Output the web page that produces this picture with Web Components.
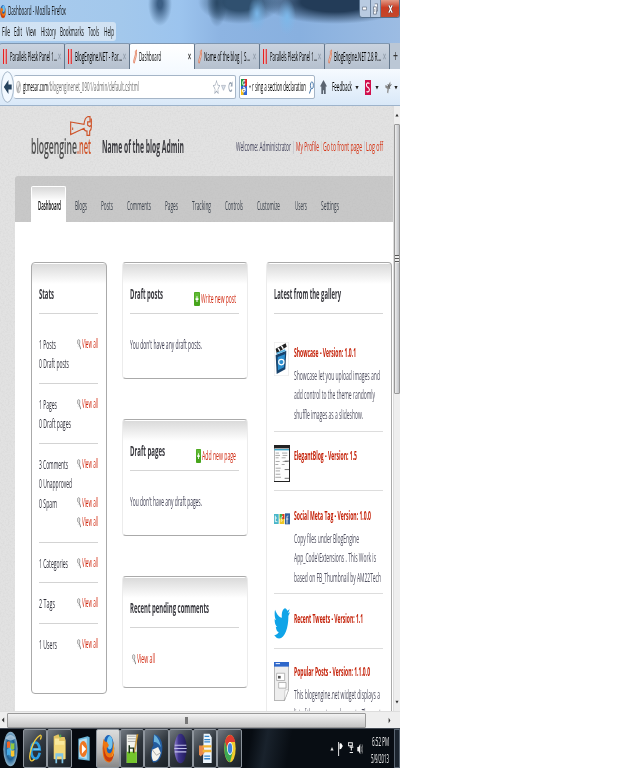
<!DOCTYPE html>
<html lang="en"><head><meta charset="utf-8"><title>Dashboard</title>
<style>
html,body{margin:0;background:#fff;height:768px;overflow:hidden}
body{font-family:"Open Sans","Noto Sans",sans-serif}
</style></head><body>
<desktop-shell></desktop-shell>
<script>
const make = (name, css, html, after) => customElements.define(name, class extends HTMLElement {
  connectedCallback() {
    if (this.shadowRoot) return;
    const root = this.attachShadow({ mode: 'open' });
    const a = (k, d = '') => this.getAttribute(k) ?? d;
    root.innerHTML = `<style>*{box-sizing:border-box}${typeof css === 'function' ? css(a) : css}</style>` + (typeof html === 'function' ? html(a) : html);
    if (after) after(this, root);
  }
});
// Condensed text: t(text, width, extra attributes)
const t = (s, w, x = '') => `<fit-text w="${w}" ${x}>${s}</fit-text>`;
const ic = (n, w, h, ml = 0) => `<pic-icon n="${n}" w="${w}" h="${h}" ml="${ml}"></pic-icon>`;

const svg = {
firefox:['0 0 32 32','<circle cx="16" cy="16" r="14" fill="#1c62b8"/><circle cx="19" cy="10" r="7" fill="#6cc3f2"/><path d="M4 6C0 14 0 25 9 29c9 4 20 0 21-11 0-5-2-8-4-10 2 7-1 13-8 13-5 0-7-3-6-6 2 0 4-1 5-3-3 0-3-3-5-3S7 10 4 6z" fill="#ee7611"/><path d="M4 12c-2 9 2 15 9 17 8 2 15-2 17-10-4 6-9 7-14 6-7-1-10-6-12-13z" fill="#c93c10"/><path d="M28 10c2 7 0 12-5 15 6-2 9-8 5-15z" fill="#ffd33b"/>'],
bars:['0 0 10 30','<path d="M0 0h3.500v30H0zM6 0h3.500v30H6z" fill="#e82020"/><path d="M3.500 0H6v30H3.500z" fill="#e9dede"/>'],
wrenchs:['0 0 10 20','<path d="M1 17L6 7V3l3-2v4l-1 5-5 9z" fill="#fbe6dd" stroke="#dd6a45" stroke-width="1.2"/>'],
back:['0 0 14 32','<ellipse cx="7" cy="16" rx="6.5" ry="15.3" fill="#f3f9ff" stroke="#93a6bb" stroke-width=".8"/><path d="M3 16l5-7v4.500h3.500v5H8V23z" fill="#28445f"/>'],
globe:['0 0 10 20','<ellipse cx="5" cy="10" rx="4.7" ry="9" fill="#b3b3b3"/><path d="M1 6l3-4 3 2-2 5-2 3zM6 10l3-1-1 6-3 3z" fill="#e9e9e9"/>'],
star:['0 0 20 20','<path d="M10 1l3 6 6 1-5 5 1 6-5-3-5 3 1-6-5-5 6-1z" fill="#fff" stroke="#a3acb9" stroke-width="1.5"/>'],
down:['0 0 10 10','<path d="M1 2h8L5 9z" fill="currentColor"/>'],
downo:['0 0 10 10','<path d="M1 2h8L5 9z" fill="#dde3ec" stroke="#9aa5b4"/>'],
reload:['0 0 20 20','<path d="M16 14a7 7 0 1 1 0-8" fill="none" stroke="#98a4b3" stroke-width="3"/><path d="M18 0v9h-8z" fill="#98a4b3"/>'],
google:['0 0 14 30','<path d="M0 0h14v30H0z" fill="#2f66d8"/><path d="M0 0h7v13H0z" fill="#209a43"/><path d="M8 0h6v12L9 15z" fill="#e02a24"/><path d="M0 20l6-3v13H0z" fill="#f5bd16"/><path d="M10 4q-6-3-6 4c0 5 6 4 5 0M5 15c8 2 5 11 0 9-4-2 0-6 4-4" fill="none" stroke="#fff" stroke-width="2"/>'],
find:['0 0 12 24','<ellipse cx="7" cy="8" rx="3.6" ry="6.5" fill="#fff" stroke="#396ca3" stroke-width="1.8"/><path d="M5 14L1 23" stroke="#396ca3" stroke-width="2"/>'],
home:['0 0 16 26','<path d="M8 0l8 12h-3v14h-4v-7H7v7H3V12H0z" fill="#5b6470"/>'],
sicon:['0 0 16 30','<path d="M0 0h16v30H0z" fill="#d10f4c"/><path d="M12 7C5 3 2 9 5 13l5 3c4 4 0 10-6 7" fill="none" stroke="#fff" stroke-width="2.6"/>'],
bug:['0 0 20 26','<path d="M1 8l7 2 7-9 1 9-5 6-2 9-3-2 1-7-6-3z" fill="#888"/><path d="M8 6l6 10M13 10l6-3" stroke="#444" stroke-width="1.5"/>'],
wrench:['0 0 66 57','<path d="M2 17L42 24C43 14 46 4 53 2h7v15h-7v9l6 4 5-4V7v25c0 7-4 10-5 11v12h-8V43c-6 0-8-3-9-8L2 53z" fill="none" stroke="#ce5228" stroke-width="3.4"/><path d="M8 33v7" stroke="#ce5228" stroke-width="3"/>'],
lens:['0 0 12 26','<ellipse cx="5" cy="7" rx="3.5" ry="6" fill="#eee" stroke="#777" stroke-width="1.6"/><path d="M7 13l4 11" stroke="#777" stroke-width="2.4"/><path d="M2 17h5" stroke="#aaa" stroke-width="1"/>'],
plus:['0 0 18 42','<rect width="18" height="42" rx="3" fill="#47a51c"/><rect x="2" y="2" width="14" height="18" fill="#6bc23f" opacity=".7"/><path d="M7.500 13h3v6h3v5h-3v6h-3v-6h-3v-5h3z" fill="#fff"/>'],
showcase:['0 0 45 100','<path d="M.5 1h43v98H.5z" fill="#fff" stroke="#ccc"/><path d="M5 20l30-16 3 10L8 34z" fill="#222"/><path d="M12 17l6 9M22 11l6 9" stroke="#fff" stroke-width="4"/><path d="M5 38l32-12-3 54-26 14z" fill="#18436c"/><path d="M11 44l22-8-3 38-18 9z" fill="#2c8fd0"/><circle cx="22" cy="59" r="8" fill="none" stroke="#fff" stroke-width="3.5"/><path d="M8 34l26-10" stroke="#59b5e5" stroke-width="5"/>'],
elegant:['0 0 48 110','<path d="M0 0h48v110H0z" fill="#222"/><path d="M1 10h44v97H1z" fill="#fdfdfd"/><path d="M1 12h44v4H1z" fill="#3ba4c7"/><path d="M5 24h10m9 0h16M4 31h14m8 0h14M5 38h9m9 0h12M5 49h12m9 0h15M4 58h9m10 0h9M5 69h15M5 77h13M5 87h14M4 96h17" stroke="#999" stroke-width="2.5"/><path d="M32 48h14M32 73h14M32 99h14" stroke="#333" stroke-width="2"/>'],
social:['0 0 48 36','<path d="M0 3h14v30H0z" fill="#49b6c9"/><path d="M17 3h14v30H17z" fill="#eec726"/><path d="M17 3h8v14h-8z" fill="#3db24b"/><path d="M25 3h6v15h-6z" fill="#df3527"/><path d="M33 1h15v33H33z" fill="#315f9e"/><path d="M4 8v18h6M4 15h5M27 11c-6-2-7 5-4 9s-1 6-3 4M43 9c-5-1-4 4-4 8v15M36 18h7" stroke="#fff" stroke-width="2.5" fill="none"/>'],
bird:['0 0 24 24','<path d="M23.950 4.570a10 10 0 0 1-2.820.770 4.960 4.960 0 0 0 2.160-2.720c-.950.550-2 .950-3.130 1.180a4.920 4.920 0 0 0-8.380 4.480C7.690 8.090 4.070 6.130 1.640 3.160a4.820 4.820 0 0 0-.670 2.480c0 1.710.870 3.210 2.190 4.100a4.900 4.900 0 0 1-2.230-.620v.060a4.920 4.920 0 0 0 3.950 4.830 5 5 0 0 1-2.210.080 4.940 4.940 0 0 0 4.600 3.420A9.870 9.870 0 0 1 0 19.540a14 14 0 0 0 7.550 2.210c9.050 0 14-7.500 14-13.980 0-.210 0-.420-.020-.630a9.940 9.940 0 0 0 2.420-2.570z" fill="#0fa4e8"/>'],
popular:['0 0 45 118','<path d="M1 1h43v82L31 117H1z" fill="#eee" stroke="#888" stroke-width="2"/><path d="M0 0h45v14H0z" fill="#2e67ca"/><path d="M5 5h13" stroke="#fff" stroke-width="3"/><path d="M8 34h24v22H8zM14 62h22v17H14z" fill="#fff" stroke="#999" stroke-width="2"/><path d="M12 42h8v8h-8z" fill="#555"/><path d="M31 117l2-32 11-2z" fill="#fff" stroke="#888"/>'],
left:['0 0 10 20','<path d="M8 2v16L2 10z" fill="#333"/>'],right:['0 0 10 20','<path d="M2 2v16l6-8z" fill="#333"/>'],
start:['0 0 46 108','<defs><radialGradient id="g"><stop stop-color="#61c6ee"/><stop offset=".6" stop-color="#1d5d92"/><stop offset="1" stop-color="#8eb5cd"/></radialGradient></defs><ellipse cx="23" cy="54" rx="22" ry="52" fill="url(#g)"/><path d="M8 22q15-22 30 0-15 13-30 0z" fill="#d9eaf4" opacity=".6"/><path d="M12 34q6-6 10 0v18q-5-5-10 0z" fill="#f06524"/><path d="M24 35q5 5 11 0v18q-6 5-11 0z" fill="#93c83e"/><path d="M12 56q5-5 10 0v18q-5-5-10 0z" fill="#45a9e5"/><path d="M24 57q5 5 11 0v18q-6 5-11 0z" fill="#ffc72e"/>'],
ie:['0 0 40 100','<path d="M33 64C27 93 7 86 7 56S30 20 33 53H11" fill="none" stroke="#2a9de2" stroke-width="8"/><path d="M33 52H14" stroke="#a3e2fb" stroke-width="3"/><path d="M5 88C-3 77 10 24 33 8c5-3 6 3 2 13M5 88c3 5 8 0 12-4" fill="none" stroke="#f6ce3b" stroke-width="4"/>'],
folder:['0 0 38 92','<path d="M2 10l14-6 4 8h14l3 10v55H2z" fill="#e4c563"/><path d="M5 16h13v8h16v52H5z" fill="#fae99b"/><path d="M4 35h31v43H4z" fill="#f4d97a"/><path d="M7 60h23v30h-5V70H12v20H7z" fill="#80c5e6"/><path d="M19 5h5v8h-5z" fill="#4eab4f"/>'],
media:['0 0 34 78','<path d="M1 8l26-7 6 3v70l-32-4z" fill="#6db9dd"/><path d="M3 12l22-5v62l-22-5z" fill="#b8ddef"/><ellipse cx="15" cy="39" rx="11" ry="24" fill="#ee7722"/><path d="M11 25v28l12-14z" fill="#fff"/>'],
notepad:['0 0 36 96','<path d="M2 5h28v88H2z" fill="#f4f5ef"/><path d="M2 58h28v35H2z" fill="#74c52c"/><path d="M5 10h22M5 18h22M5 26h22" stroke="#888" stroke-width="2"/><path d="M9 38v25M9 47h12v14" stroke="#193119" stroke-width="4" fill="none"/><path d="M34 4l-9 51-2 8V53L30 4z" fill="#f1b436" stroke="#80551b"/>'],
thunder:['0 0 40 96','<path d="M13 4q23 5 25 38c1 37-15 52-28 49Q1 82 3 59q1-14 8-22-5-14 2-33z" fill="#235b9e"/><path d="M13 5q16 12 21 40-10-18-22-17z" fill="#69b1dc"/><path d="M7 52l18-9 8 18q-6 27-23 26-8-14-3-35z" fill="#f5f3ed"/><path d="M7 52l13 17 13-8" stroke="#aaa" stroke-width="3" fill="none"/>'],
eclipse:['0 0 38 92','<defs><linearGradient id="e"><stop stop-color="#9382d1"/><stop offset=".35" stop-color="#3e348c"/><stop offset="1" stop-color="#211b5b"/></linearGradient></defs><ellipse cx="19" cy="46" rx="18" ry="44" fill="url(#e)"/><path d="M2 36h34M1 46h36M2 56h34" stroke="#c4c4ec" stroke-width="3"/>'],
doc:['0 0 42 94','<path d="M15 2h19l7 12v77H13z" fill="#edf5fc"/><path d="M18 10h15M17 20h19M17 27h19M17 70h19M17 78h19" stroke="#3687cb" stroke-width="4"/><path d="M0 38h15l3 22-13 11-5-6z" fill="#e98a4c"/><path d="M12 37h28v7H12zM12 51h28v7H12z" fill="#f4b634"/>'],
chrome:['0 0 36 90','<ellipse cx="18" cy="45" rx="17" ry="43" fill="#f2cd2c"/><path d="M3 24C9-4 28-5 34 25H18q-8 2-9 22z" fill="#df3b30"/><path d="M3 23q-7 53 15 65l8-32q-7 12-14 0z" fill="#3ca852"/><ellipse cx="18" cy="45" rx="8.500" ry="20" fill="#fff"/><ellipse cx="18" cy="45" rx="6.500" ry="16" fill="#3d82df"/>'],
up:['0 0 10 10','<path d="M1 9h8L5 2z" fill="#ddd"/>'],
flag:['0 0 20 42','<path d="M2 0v42" stroke="#eee" stroke-width="3"/><path d="M5 5l5-2 6 9-6 9-5 1z" fill="#fff"/>'],
net:['0 0 18 38','<path d="M1 2h12v9H1zM5 15h11M10 13v12M5 31h10" fill="none" stroke="#eee" stroke-width="3"/>'],
sound:['0 0 20 36','<path d="M1 12h4l6-10v32L5 25H1z" fill="#eee"/><path d="M14 10q4 8 0 17M17 4q6 14 0 28" fill="none" stroke="#ccc" stroke-width="1.5"/>'],
max:['0 0 12 28','<path d="M4 2h7v17H8M1 9h7v17H1z" fill="#fff" stroke="#48566c" stroke-width="1.5"/><path d="M4 14v7" stroke="#48566c"/>'],
min:['0 0 12 14','<path d="M1 3h10v8H1z" fill="#fff" stroke="#48566c" stroke-width="1.500"/>'],
x:['0 0 10 20','<path d="M1 2l8 16M9 2L1 18" stroke="currentColor" stroke-width="2.200"/>'],
xw:['0 0 12 24','<path d="M2 3l8 18M10 3L2 21" stroke="#57282a" stroke-width="5"/><path d="M2 3l8 18M10 3L2 21" stroke="#fff" stroke-width="3"/>']
};
const noise = `url("data:image/svg+xml,%3Csvg xmlns='http://www.w3.org/2000/svg' width='120' height='120'%3E%3Cfilter id='n'%3E%3CfeTurbulence type='fractalNoise' baseFrequency='.6' numOctaves='2' stitchTiles='stitch'/%3E%3CfeColorMatrix values='0 0 0 0 .4 0 0 0 0 .4 0 0 0 0 .4 .3 0 0 0 -.12'/%3E%3C/filter%3E%3Crect width='120' height='120' filter='url(%23n)'/%3E%3C/svg%3E")`;

make('pic-icon', a => `:host{display:block;flex:none;width:${a('w')}px;height:${a('h')}px;margin-left:${a('ml', 0)}px}svg{display:block;width:100%;height:100%}`,
  a => `<svg viewBox="${svg[a('n')][0]}" preserveAspectRatio="none">${svg[a('n')][1]}</svg>`);

make('window-title', `:host{display:block;height:43px;background:
 radial-gradient(ellipse 9px 18px at 257px 14px,#79b6e8,transparent),radial-gradient(ellipse 9px 18px at 287px 17px,#7cb8ea,transparent),
 radial-gradient(ellipse 10px 24px at 217px 3px,#2a4865,transparent),radial-gradient(ellipse 75px 22px at 335px 2px,#233c58 45%,transparent),radial-gradient(ellipse 42px 22px at 240px 2px,#30506f 40%,transparent),
 radial-gradient(ellipse 12px 22px at 160px 4px,#3c5f85 20%,transparent),
 linear-gradient(90deg,#a9cbed,#a3c8ec 30%,#9cc4ee 45%,#8db4e2 55%,#88b0df 75%,#9cbce3)}
 .a{display:flex;height:22px;align-items:center}.b{display:flex;height:19px;width:116px;align-items:center;background:#dce8f5cc;border-radius:0 3px 3px 0}
 .w{display:flex;height:18px;align-self:flex-start;margin-left:auto;border:1px solid #57728f;border-top:0;border-radius:0 0 3px 3px;width:41px;background:#b9cbe1;flex:none;overflow:hidden}
 .w div{flex:1;display:flex;align-items:center;justify-content:center;border-right:1px solid #6b829e}.w .c{flex:0 0 18px;background:linear-gradient(#e29a86,#ca3d24 45%,#c3482b);border:0}`,
 `<div class="a">${ic('firefox',6,15)}${t('Dashboard - Mozilla Firefox',58,'ml="2"')}<div class="w"><div>${ic('min',5,5)}</div><div>${ic('max',5,12)}</div><div class="c">${ic('xw',5,10)}</div></div></div>
 <div class="b">${[['File',8,2],['Edit',8,4],['View',10,4],['History',15,5],['Bookmarks',24,4],['Tools',11,4],['Help',10,5]].map(m=>t(m[0],m[1],`ml="${m[2]}"`)).join('')}</div>`);

make('browser-tab', a => `:host{display:flex;align-items:center;width:65px;height:26px;flex:none;padding-right:3px;border-right:1px solid #64778c;border-top:1px solid #8097b0;border-radius:2px 2px 0 0;
 background:${a('active')?'linear-gradient(#fff,#f5faff)':'linear-gradient(#cad3df,#b5c0ce)'};color:${a('active')?'#222':'#8c98a5'}}s{flex:1}`,
 a => `${ic(a('icon'),4,15,3)}${t(a('label'),a('w'),`ml="${a('gap',3)}" c="#000"`)}<s></s>${ic('x',3,7)}`);

make('tab-strip', `:host{display:flex;height:26px;background:#9fb6d0}b{flex:1;background:#bbc7d5;display:grid;place-items:center}`,
 `<browser-tab icon="bars" label="Parallels Plesk Panel 1..." w="47"></browser-tab><browser-tab icon="bars" label="BlogEngine.NET - Par..." w="47"></browser-tab><browser-tab active="1" icon="wrenchs" label="Dashboard" w="22" gap="2"></browser-tab><browser-tab icon="wrenchs" label="Name of the blog | S..." w="46" gap="2"></browser-tab><browser-tab icon="bars" label="Parallels Plesk Panel 1..." w="47"></browser-tab><browser-tab icon="wrenchs" label="BlogEngine.NET 2.8 R..." w="47" gap="2"></browser-tab><b>${t('+',5,'size="17" wt="400" c="#333"')}</b>`);

make('nav-toolbar', `:host{display:flex;align-items:center;height:37px;background:linear-gradient(#f6faff,#d9e8f8);border-bottom:1px solid #9db3cb;padding-left:1px;color:#222}
 .u,.s{display:flex;align-items:center;height:24px;background:#fff;border:1px solid #a5b5c7;border-radius:2px;flex:none}.u{width:222px;padding-left:2px;border-left:0}.s{width:76px;margin-left:3px}s{flex:1}`,
 `${ic('back',13,32)}<div class="u">${ic('globe',5,14)}${t('gtmesar.com',25,'ml="2" c="#000"')}${t('/blogenginenet_0901/admin/default.cshtml',91,'c="#777"')}<s></s>${ic('star',7,14)}${ic('downo',5,7,1)}${ic('reload',5,12,2)}<s style="flex:0 0 2px"></s></div>
 <div class="s">${ic('google',6,16,1)}${ic('down',2,4,2)}${t('r sing a section declaration',54,'ml="1" c="#000"')}${ic('find',5,13,3)}</div>
 ${ic('home',7,14,5)}${t('Feedback',20,'ml="5" c="#000"')}${ic('down',4,5,3)}${ic('sicon',6,15,6)}${ic('down',4,5,4)}${ic('bug',7,13,6)}${ic('down',4,5,2)}`);

make('site-header', `:host{display:flex;height:70px;position:relative;align-items:flex-start}
 .l{display:flex;margin:22px 0 0 31px;height:34px;align-items:center;position:relative}.l pic-icon{position:absolute;left:39px;top:-12px}
 .n{margin:31px 0 0 11px}.w{display:flex;margin:31px 0 0 52px}`,
 `<div class="l">${t('blogengine',46,'size="22" c="#4e4e4e" wt="600"')}${t('.net',14,'size="22" c="#d0542a" wt="600"')}${ic('wrench',22,20)}</div>
 <div class="n">${t('Name of the blog Admin',82,'size="17" c="#3d3d42" wt="700"')}</div>
 <div class="w">${t('Welcome: Administrator',55,'c="#44445c"')}${t('|',1,'ml="2" c="#446"')}${t('My Profile',23,'ml="2" c="#d12a10"')}${t('|',1,'ml="2" c="#996"')}${t('Go to front page',39,'ml="1" c="#d53010"')}${t('|',1,'ml="2" c="#446"')}${t('Log off',17,'ml="1" c="#d53010"')}</div>`);

make('site-nav', `:host{display:flex;align-items:flex-end;height:46px;margin-left:15px;padding-left:16px;background:${noise} #c8c8c8;border-radius:3px 0 0 0}
 div{height:36px;padding-top:10px;display:flex}.on{width:35px;background:linear-gradient(#d8d8d8,#fff 14px);border:1px solid #fff;border-bottom:0;border-radius:2px 2px 0 0;padding:9px 0 0 6px}`,
 `<div class="on">${t('Dashboard',23,'wt="600" c="#000"')}</div><div>${[['Blogs',12,9],['Posts',12,14],['Comments',24,14],['Pages',13,14],['Tracking',19,14],['Controls',18,14],['Customize',23,14],['Users',12,15],['Settings',18,14]].map(m=>t(m[0],m[1],`ml="${m[2]}" c="#3c434d"`)).join('')}</div>`);

make('panel-card', a => `:host{display:block;flex:none;height:${a('h')}px;border:1px solid #aaa;border-left-color:${a('sides','lr').includes('l')?'#aaa':'#ececec'};border-right-color:${a('sides','lr').includes('r')?'#aaa':'#ececec'};border-radius:4px;background:linear-gradient(#fff 1px,#dadada 1px,#fff 21px);padding:0 8px 0 7px}
 header{display:flex;height:51px;border-bottom:1px solid #d5d5d5;padding-top:21px}s{flex:1}.x{display:flex;padding:5px 3px 0 0;height:20px;align-items:center;margin-top:2px}`,
 a => `<header>${t(a('label'),a('w'),'size="14" wt="700" c="#38383e" ')}<s></s><div class="x"><slot name="action"></slot></div></header><slot></slot>`);

make('view-link', `:host{display:flex;height:20px;align-items:center}`, a => `${ic('lens',4,11)}${t('View all',a('w',16),'ml="1" c="#d0280f"')}`);

make('stat-group', a => `:host{display:block;height:${a('h')}px;border-bottom:${a('last')?0:1}px solid #d3d3d3;padding-top:${a('pt',11)}px}.r{display:flex;justify-content:space-between;height:19.400px}view-link{margin-top:-1px}`,
 a => JSON.parse(a('rows')).map(r => `<div class="r">${r[0]?t(r[0],r[1],'c="#30303a"'):'<i></i>'}${r[2]?'<view-link></view-link>':''}</div>`).join(''));

make('gallery-item', a => `:host{display:flex;height:${a('h')}px;border-bottom:1px solid #ddd;width:109px}
 .i{width:19.500px;padding-top:${a('it')}px;flex:none}.t{padding-top:${a('tt')}px}.d{padding-top:3px}.d fit-text{height:19.300px}`,
 a => `<div class="i">${ic(a('icon'),a('iw',15),a('ih'))}</div><div class="t">${t(a('label'),a('w'),'wt="700" c="#c41f06"')}<div class="d">${JSON.parse(a('lines','[]')).map(l=>t(l[0],l[1],'c="#505060"')).join('')}</div></div>`);

make('admin-page', `:host{display:block;width:393px;height:605px;overflow:hidden;background:${noise} #e2e2e2}
 main{display:flex;margin-left:15px;background:#fff;height:489px;padding:40px 1px 0 16px;align-items:flex-start}.m{width:126px;margin:0 18px 0 15px;display:flex;flex-direction:column;gap:40px}.s{width:76px}.g{width:126px}
 .p{padding-top:21px}.a{display:flex;align-items:center}`,
 `<site-header></site-header><site-nav></site-nav><main>
 <panel-card class="s" h="432" label="Stats" w="15"><stat-group h="70" pt="21" rows='[["1 Posts",17,1],["0 Draft posts",30]]'></stat-group><stat-group h="60" rows='[["1 Pages",18,1],["0 Draft pages",32]]'></stat-group><stat-group h="99" rows='[["3 Comments",29,1],["0 Unapproved",33],["0 Spam",18,1],["",0,1]]'></stat-group><stat-group h="40" rows='[["1 Categories",29,1]]'></stat-group><stat-group h="41" rows='[["2 Tags",16,1]]'></stat-group><stat-group h="40" last="1" rows='[["1 Users",18,1]]'></stat-group></panel-card>
 <div class="m"><panel-card sides="" h="117" label="Draft posts" w="33"><div class="a" slot="action">${ic('plus',6,14)}${t('Write new post',35,'ml="1" c="#d0280f"')}</div><div class="p">${t("You don't have any draft posts.",72,'c="#3c3c50"')}</div></panel-card>
 <panel-card sides="" h="117" label="Draft pages" w="35"><div class="a" slot="action">${ic('plus',5,14)}${t('Add new page',34,'ml="1" c="#d0280f"')}</div><div class="p">${t("You don't have any draft pages.",72,'c="#3c3c50"')}</div></panel-card>
 <panel-card sides="" h="112" label="Recent pending comments" w="79"><div class="p" style="padding-left:2px"><view-link w="18"></view-link></div></panel-card></div>
 <panel-card sides="r" class="g" h="600" label="Latest from the gallery" w="67">
 <gallery-item h="118" icon="showcase" it="28" ih="34" tt="29" label="Showcase - Version: 1.0.1" w="62" lines='[["Showcase let you upload images and",86],["add control to the theme randomly",81],["shuffle images as a slideshow.",69]]'></gallery-item>
 <gallery-item h="59" icon="elegant" iw="16" it="13" ih="37" tt="14" label="ElegantBlog - Version: 1.5" w="63"></gallery-item>
 <gallery-item h="103" icon="social" iw="16" it="22" ih="12" tt="15" label="Social Meta Tag - Version: 1.0.0" w="77" lines='[["Copy files under BlogEngine",65],["App_Code\\\\Extensions . This Work is",82],["based on FB_Thumbnail by AM22Tech",87]]'></gallery-item>
 <gallery-item h="55" icon="bird" iw="16" it="11" ih="37" tt="15" label="Recent Tweets - Version: 1.1" w="69"></gallery-item>
 <gallery-item h="90" icon="popular" it="13" ih="39" tt="13" label="Popular Posts - Version: 1.1.0.0" w="76" lines='[["This blogengine.net widget displays a",86],["list of the most popular posts. The post",87]]'></gallery-item></panel-card></main>`);

make('scroll-v', `:host{display:flex;flex-direction:column;width:7px;height:605px;background:#eee;border-left:1px solid #ddd;align-items:center}.a{height:18px;display:grid;place-items:center;color:#333}.t{width:6px;height:270px;border:1px solid #999;border-radius:1px;background:linear-gradient(90deg,#eee,#bfc1c5);display:grid;place-items:center}.t i{width:4px;height:8px;background:repeating-linear-gradient(#555 0 1px,#eee 1px 3px)}s{flex:1}`,
 `<div class="a">${ic('up',4,4)}</div><div class="t"><i></i></div><s></s><div class="a">${ic('down',4,4)}</div>`,
 (h, r) => r.querySelector('pic-icon').style.filter = 'brightness(.2)');
make('scroll-h', `:host{display:flex;height:17px;background:#eee;border-top:1px solid #ddd;align-items:center}.t{width:359px;height:15px;margin-left:2px;border:1px solid #999;border-radius:1px;background:linear-gradient(#f2f2f2,#ddd 45%,#c3c3c3);display:grid;place-items:center}.t i{width:3px;height:7px;background:#777}`,
 `${ic('left',4,6,1)}<div class="t"><i></i></div>${ic('right',3,7,22)}`);

make('task-button', a => `:host{display:grid;place-items:center;flex:none;width:24.300px;height:39px;border:1px solid ${a('k')=='off'?'transparent':'#8d949c'};border-radius:2px;background:${a('k')=='off'?'none':a('k')=='on'?'linear-gradient(#ddd,#b5b5b5 60%,#888)':'linear-gradient(135deg,#717880,#30373e 50%,#1a2026)'}}`,
 a => ic(a('n'), a('w',13), a('h',31)));
make('task-bar', `:host{display:flex;height:40px;background:linear-gradient(100deg,#060a10 55%,#070c12 62%,#19222c 66%,#080d13 72%);border-top:1px solid #444b55;align-items:center}s{flex:1}.c{width:19px;margin-left:8px}.c fit-text{height:17px}.d{width:6px;height:39px;border:1px solid #596470;background:#1c252f;margin-left:4px}.o{width:23px;padding-left:3px}`,
 `<div class="o">${ic('start',15,36)}</div><task-button n="ie"></task-button><task-button n="folder"></task-button><task-button k="off" n="media" w="12" h="26"></task-button><task-button k="on" n="firefox"></task-button><task-button n="notepad"></task-button><task-button n="thunder"></task-button><task-button n="eclipse"></task-button><task-button n="doc"></task-button><task-button n="chrome" w="12" h="29"></task-button><s></s>${ic('up',4,5)}${ic('flag',6,14,4)}${ic('net',6,13,4)}${ic('sound',6,12,3)}
 <div class="c">${t('6:52 PM',17,'c="#eee" ml="1"')}${t('5/9/2013',18,'c="#eee"')}</div><div class="d"></div>`);

make('desktop-shell', `:host{display:block;width:400px;height:768px;overflow:hidden}.v{display:flex}`,
 `<window-title></window-title><tab-strip></tab-strip><nav-toolbar></nav-toolbar><div class="v"><admin-page></admin-page><scroll-v></scroll-v></div><scroll-h></scroll-h><task-bar></task-bar>`);

make('fit-text', a => `:host{display:block;flex:none;width:${a('w')}px;height:20px;margin-left:${a('ml',0)}px;color:${a('c','#111')};font-size:${a('size',12)}px;font-weight:${a('wt',400)};line-height:20px;white-space:pre}span{display:inline-block;transform-origin:0 50%}`,
 '<span><slot></slot></span>', (h, r) => {
  const s = r.querySelector('span');
  s.style.transform = `scaleX(${h.getAttribute('w') / s.getBoundingClientRect().width})`;
 });
</script>
</body></html>
